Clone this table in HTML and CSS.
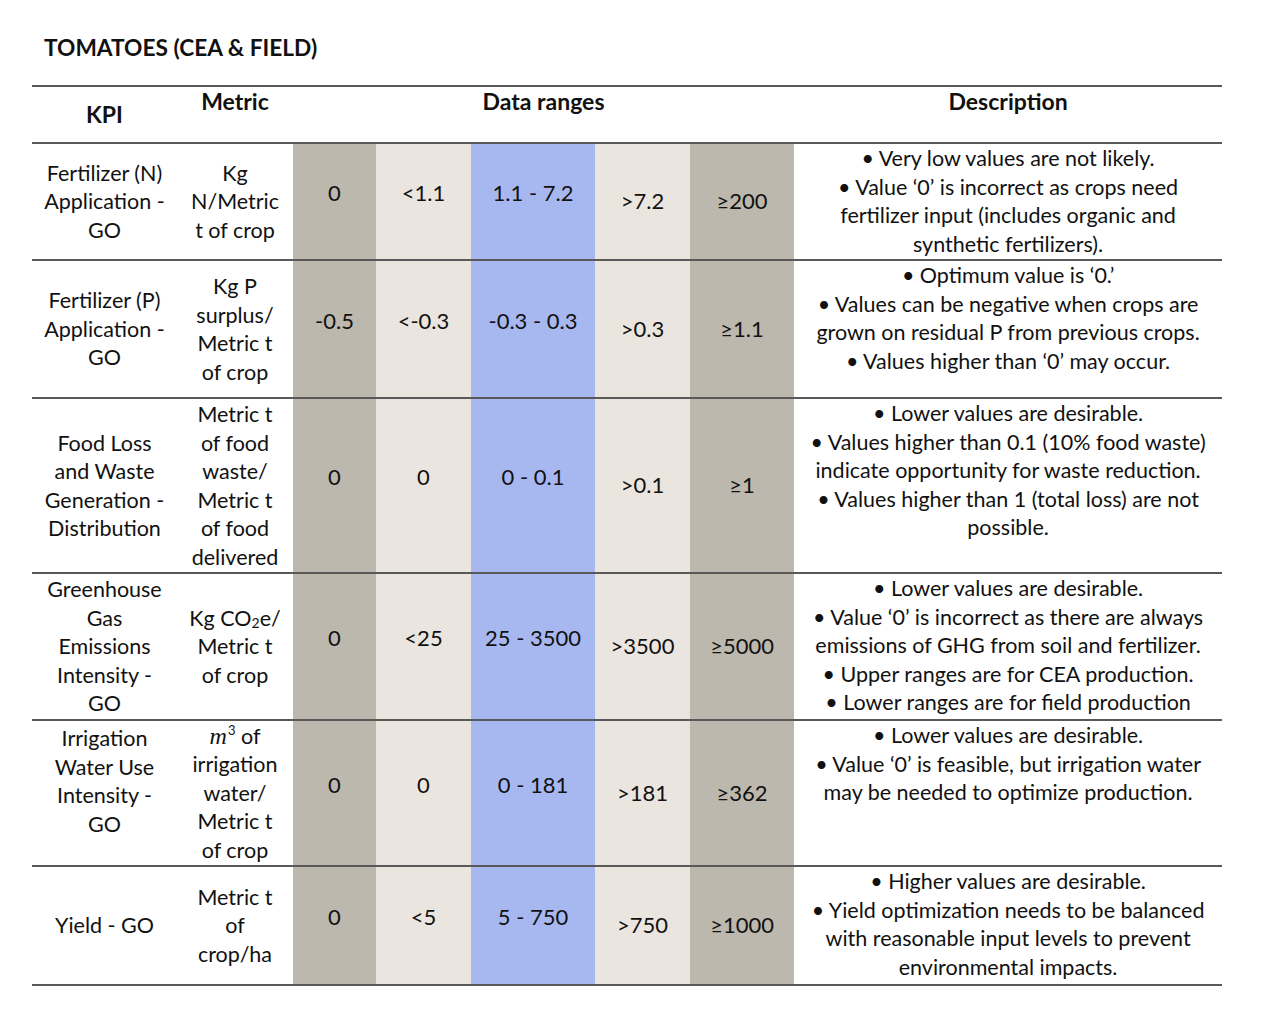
FILE: index.html
```html
<!DOCTYPE html>
<html lang="en">
<head>
<meta charset="utf-8">
<title>Tomatoes (CEA &amp; Field)</title>
<link rel="stylesheet" href="styles.css">
</head>
<body>
<h1 class="title">TOMATOES (CEA &amp; FIELD)</h1>
<table class="kpi-table">
  <colgroup>
    <col class="c-kpi"><col class="c-metric"><col class="c-v1"><col class="c-v2"><col class="c-v3"><col class="c-v4"><col class="c-v5"><col class="c-desc">
  </colgroup>
  <thead>
    <tr class="head">
      <th class="h-kpi">KPI</th>
      <th class="h-top">Metric</th>
      <th class="h-top" colspan="5">Data ranges</th>
      <th class="h-top">Description</th>
    </tr>
  </thead>
  <tbody>
    <tr class="r1">
      <td class="kpi">Fertilizer (N)<br>Application -<br>GO</td>
      <td class="metric">Kg<br>N/Metric<br>t of crop</td>
      <td class="v gray up">0</td>
      <td class="v light up">&lt;1.1</td>
      <td class="v blue up">1.1 - 7.2</td>
      <td class="v light">&gt;7.2</td>
      <td class="v gray">≥200</td>
      <td class="desc">• Very low values are not likely.<br>• Value ‘0’ is incorrect as crops need<br>fertilizer input (includes organic and<br>synthetic fertilizers).</td>
    </tr>
    <tr class="r2">
      <td class="kpi">Fertilizer (P)<br>Application -<br>GO</td>
      <td class="metric">Kg P<br>surplus/<br>Metric t<br>of crop</td>
      <td class="v gray up">-0.5</td>
      <td class="v light up">&lt;-0.3</td>
      <td class="v blue up">-0.3 - 0.3</td>
      <td class="v light">&gt;0.3</td>
      <td class="v gray">≥1.1</td>
      <td class="desc">• Optimum value is ‘0.’<br>• Values can be negative when crops are<br>grown on residual P from previous crops.<br>• Values higher than ‘0’ may occur.</td>
    </tr>
    <tr class="r3">
      <td class="kpi">Food Loss<br>and Waste<br>Generation -<br>Distribution</td>
      <td class="metric">Metric t<br>of food<br>waste/<br>Metric t<br>of food<br>delivered</td>
      <td class="v gray up">0</td>
      <td class="v light up">0</td>
      <td class="v blue up">0 - 0.1</td>
      <td class="v light">&gt;0.1</td>
      <td class="v gray">≥1</td>
      <td class="desc">• Lower values are desirable.<br>• Values higher than 0.1 (10% food waste)<br>indicate opportunity for waste reduction.<br>• Values higher than 1 (total loss) are not<br>possible.</td>
    </tr>
    <tr class="r4">
      <td class="kpi">Greenhouse<br>Gas<br>Emissions<br>Intensity -<br>GO</td>
      <td class="metric">Kg CO<span class="sub">2</span>e/<br>Metric t<br>of crop</td>
      <td class="v gray up">0</td>
      <td class="v light up">&lt;25</td>
      <td class="v blue up">25 - 3500</td>
      <td class="v light">&gt;3500</td>
      <td class="v gray">≥5000</td>
      <td class="desc">• Lower values are desirable.<br>• Value ‘0’ is incorrect as there are always<br>emissions of GHG from soil and fertilizer.<br>• Upper ranges are for CEA production.<br>• Lower ranges are for field production</td>
    </tr>
    <tr class="r5">
      <td class="kpi top">Irrigation<br>Water Use<br>Intensity -<br>GO</td>
      <td class="metric"><span class="math">m</span><span class="sup">3</span> of<br>irrigation<br>water/<br>Metric t<br>of crop</td>
      <td class="v gray up">0</td>
      <td class="v light up">0</td>
      <td class="v blue up">0 - 181</td>
      <td class="v light">&gt;181</td>
      <td class="v gray">≥362</td>
      <td class="desc">• Lower values are desirable.<br>• Value ‘0’ is feasible, but irrigation water<br>may be needed to optimize production.</td>
    </tr>
    <tr class="r6">
      <td class="kpi">Yield - GO</td>
      <td class="metric">Metric t<br>of<br>crop/ha</td>
      <td class="v gray up">0</td>
      <td class="v light up">&lt;5</td>
      <td class="v blue up">5 - 750</td>
      <td class="v light">&gt;750</td>
      <td class="v gray">≥1000</td>
      <td class="desc">• Higher values are desirable.<br>• Yield optimization needs to be balanced<br>with reasonable input levels to prevent<br>environmental impacts.</td>
    </tr>
  </tbody>
</table>
</body>
</html>
```
FILE: styles.css
```css
html, body {
  margin: 0;
  padding: 0;
  background: #ffffff;
}
body {
  font-family: Lato, "Open Sans", "Liberation Sans", sans-serif;
  color: #111111;
  font-size: 21.5px;
}
.title {
  margin: 0;
  padding: 34px 0 0 44px;
  height: 51px;
  font-size: 22.7px;
  font-weight: 700;
  line-height: 28px;
}
.kpi-table {
  margin-left: 32px;
  width: 1190px;
  border-collapse: collapse;
  table-layout: fixed;
  line-height: 28.5px;
  font-size: 21.5px;
}
.c-kpi { width: 145px; }
.c-metric { width: 116px; }
.c-v1 { width: 83px; }
.c-v2 { width: 95px; }
.c-v3 { width: 124px; }
.c-v4 { width: 95px; }
.c-v5 { width: 104px; }
.c-desc { width: 428px; }

.kpi-table th,
.kpi-table td {
  padding: 0;
  text-align: center;
  white-space: nowrap;
  border-top: 2px solid #595959;
  border-bottom: 2px solid #595959;
}
.head { height: 57px; }
.head th {
  font-weight: 700;
  font-size: 23px;
}
.h-kpi {
  vertical-align: middle;
  padding-top: 2px;
}
.h-top {
  vertical-align: top;
  padding-top: 8px;
}
.kpi, .metric, .v {
  vertical-align: middle;
}
.kpi { padding-top: 5px; }
.metric { padding-top: 5px; }
.kpi.top {
  vertical-align: top;
  padding-top: 3px;
}
.desc {
  vertical-align: top;
  padding-top: 6px;
}
.v {
  font-size: 22px;
  padding-top: 5px;
}
.v.up {
  padding-top: 0;
  padding-bottom: 16px;
}
.gray { background: #bcb8ad; }
.light { background: #ebe5df; }
.blue { background: #a7b8f1; }

.r1 { height: 117px; }
.r2 { height: 138px; }
.r3 { height: 175px; }
.r4 { height: 147px; }
.r5 { height: 146px; }
.r6 { height: 119px; }

.sub {
  font-size: 14px;
  vertical-align: -2px;
  line-height: 0;
}
.sup {
  font-size: 13px;
  vertical-align: 9px;
  line-height: 0;
  margin-left: 1px;
}
.math {
  font-family: "Liberation Serif", "DejaVu Serif", serif;
  font-style: italic;
  font-size: 24px;
}
```
